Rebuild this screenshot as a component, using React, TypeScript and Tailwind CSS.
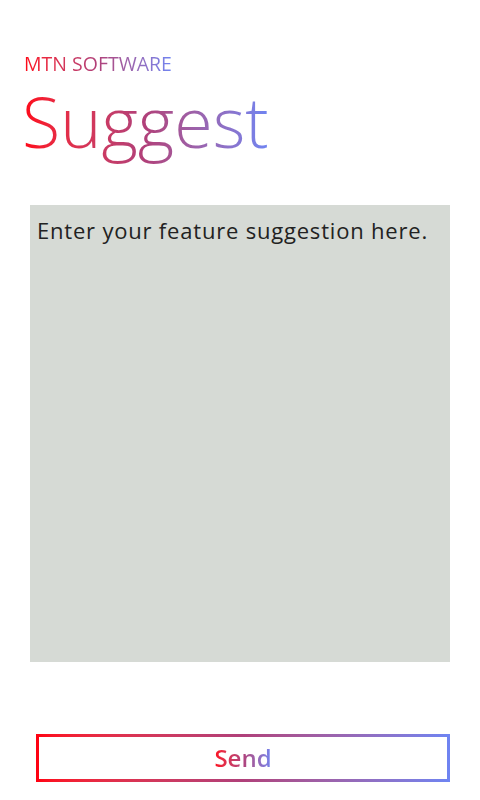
export default function App() {
  const grad = "bg-linear-to-r from-[#ff0010] via-[#b0407a] to-[#6e84f2]";
  return (
    <div className="flex h-[800px] w-[480px] flex-col bg-white font-['Open_Sans','Noto_Sans',sans-serif]">
      {/* Header */}
      <div className="pl-6 pt-[53px]">
        <div className={`inline-block bg-clip-text text-[19.5px] leading-[20px] text-transparent ${grad}`}>
          MTN SOFTWARE
        </div>
        <div>
          <h1 className={`-ml-[2px] inline-block bg-clip-text pb-[6px] text-[70px] font-light leading-[88px] text-transparent ${grad}`}>
            Suggest
          </h1>
        </div>
      </div>

      {/* Suggestion box */}
      <div className="mx-[30px] mt-[34px] h-[457px] bg-[#d6dad5] px-[7px] pt-[11px]">
        <p className="text-[22px] leading-[28px] tracking-[0.8px] text-[#222222]">
          Enter your feature suggestion here.
        </p>
      </div>

      {/* Send button */}
      <div className={`mx-[36px] mt-[72px] h-[48px] w-[414px] p-[3px] ${grad}`}>
        <button className="flex h-full w-full items-center justify-center bg-white">
          <span className={`inline-block bg-clip-text text-[24px] font-semibold leading-[30px] text-transparent ${grad}`}>
            Send
          </span>
        </button>
      </div>
    </div>
  );
}
